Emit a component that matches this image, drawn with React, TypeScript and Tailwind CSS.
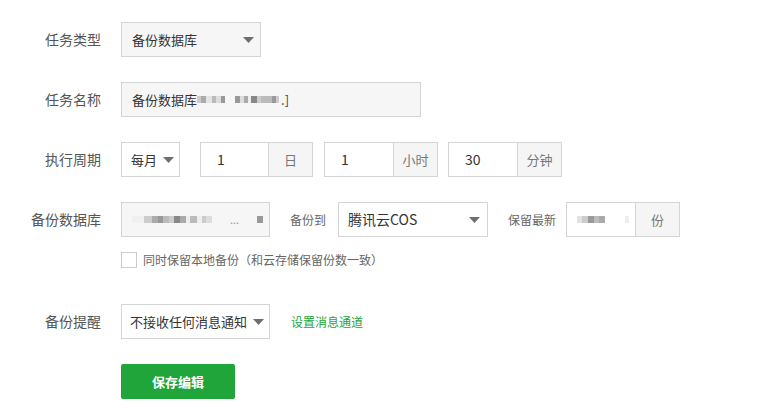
import { useState } from "react";

const font = { fontFamily: '"Noto Sans CJK SC", "Liberation Sans", sans-serif' };

function Caret({ className = "" }: { className?: string }) {
  return (
    <svg width="11" height="6" viewBox="0 0 11 6" className={className}>
      <path d="M0 0h11L5.5 6z" fill="#6f6f6f" />
    </svg>
  );
}

function Label({ children }: { children: React.ReactNode }) {
  return <div className="w-[101px] shrink-0 text-right text-[14px] text-[#555]">{children}</div>;
}

function Blur({ blocks }: { blocks: [number, string][] }) {
  return (
    <span className="inline-flex items-center">
      {blocks.map(([w, c], i) => (
        <span key={i} className="inline-block h-[7px]" style={{ width: w, background: c }} />
      ))}
    </span>
  );
}

function Addon({ value, unit, width }: { value: string; unit: string; width: number }) {
  return (
    <div className="flex h-[35px] border border-[#d5d5d5]" style={{ width }}>
      <div className="flex flex-1 items-center bg-white pl-[16px] text-[14px] text-[#333]">{value}</div>
      <div className="flex w-[44px] items-center justify-center border-l border-[#d5d5d5] bg-[#f5f5f5] text-[13px] text-[#777]">
        {unit}
      </div>
    </div>
  );
}

export default function App() {
  const [keepLocal, setKeepLocal] = useState(false);

  return (
    <div className="h-[415px] w-[778px] bg-white" style={font}>
      <div className="flex flex-col pt-[22px]">
        <div className="flex h-[35px] items-center gap-[20px]">
          <Label>任务类型</Label>
          <div className="flex h-[35px] w-[140px] items-center justify-between border border-[#d5d5d5] bg-[#f6f6f6] pl-[10px] pr-[6px] text-[13px] text-[#333]">
            备份数据库
            <Caret />
          </div>
        </div>

        <div className="mt-[25px] flex h-[35px] items-center gap-[20px]">
          <Label>任务名称</Label>
          <div className="flex h-[35px] w-[300px] items-center border border-[#d5d5d5] bg-[#f6f6f6] pl-[10px] text-[13px] text-[#333]">
            备份数据库
            <Blur
              blocks={[
                [4, "#ccc"], [5, "#aaa"], [6, "#e4e4e4"], [4, "#bbb"], [5, "#ddd"], [4, "#999"], [10, "#f6f6f6"],
                [5, "#999"], [4, "#ddd"], [4, "#aaa"], [3, "#eee"], [6, "#888"], [4, "#ccc"], [4, "#bbb"], [7, "#bbb"],
                [4, "#999"], [3, "#ccc"],
              ]}
            />
            <span className="ml-[2px] text-[#444]">.]</span>
          </div>
        </div>

        <div className="mt-[25px] flex h-[35px] items-center">
          <Label>执行周期</Label>
          <div className="ml-[20px] flex h-[35px] w-[59px] items-center justify-between border border-[#d5d5d5] bg-white pl-[9px] pr-[5px] text-[13px] text-[#333]">
            每月
            <Caret />
          </div>
          <div className="ml-[20px]">
            <Addon value="1" unit="日" width={113} />
          </div>
          <div className="ml-[11px]">
            <Addon value="1" unit="小时" width={114} />
          </div>
          <div className="ml-[10px]">
            <Addon value="30" unit="分钟" width={114} />
          </div>
        </div>

        <div className="mt-[25px] flex h-[35px] items-center">
          <Label>备份数据库</Label>
          <div className="ml-[20px] flex h-[35px] w-[149px] items-center justify-between border border-[#d5d5d5] bg-[#f6f6f6] pl-[10px] pr-[6px] text-[13px] text-[#999]">
            <Blur
              blocks={[
                [12, "#f0f0f0"], [8, "#ccc"], [6, "#aaa"], [5, "#999"], [6, "#bbb"], [5, "#ccc"], [6, "#888"], [6, "#aaa"],
                [4, "#eee"], [7, "#bbb"], [5, "#eee"], [4, "#ccc"], [6, "#ddd"],
              ]}
            />
            <span className="text-[11px]">...</span>
            <span className="inline-block h-[7px] w-[6px] bg-[#999]" />
          </div>
          <div className="ml-[20px] text-[12px] text-[#666]">备份到</div>
          <div className="ml-[12px] flex h-[35px] w-[150px] items-center justify-between border border-[#d5d5d5] bg-white pl-[9px] pr-[7px] text-[14px] text-[#333]">
            腾讯云COS
            <Caret />
          </div>
          <div className="ml-[20px] text-[12px] text-[#666]">保留最新</div>
          <div className="ml-[10px] flex h-[35px] w-[114px] border border-[#d5d5d5]">
            <div className="flex flex-1 items-center bg-white pl-[10px]">
              <Blur blocks={[[5, "#e2e2e2"], [6, "#ccc"], [6, "#999"], [5, "#bbb"], [6, "#aaa"], [20, "#fff"], [4, "#eee"]]} />
            </div>
            <div className="flex w-[44px] items-center justify-center border-l border-[#d5d5d5] bg-[#f5f5f5] text-[13px] text-[#777]">
              份
            </div>
          </div>
        </div>

        <div className="mt-[15px] flex h-[16px] items-center pl-[121px]">
          <button
            onClick={() => setKeepLocal(!keepLocal)}
            className="h-[16px] w-[16px] border border-[#ccc] bg-white"
          />
          <span className="ml-[6px] text-[12px] text-[#666]">同时保留本地备份（和云存储保留份数一致）</span>
        </div>

        <div className="mt-[36px] flex h-[35px] items-center">
          <Label>备份提醒</Label>
          <div className="ml-[20px] flex h-[35px] w-[149px] items-center justify-between border border-[#d5d5d5] bg-white pl-[8px] pr-[5px] text-[13px] text-[#333]">
            不接收任何消息通知
            <Caret />
          </div>
          <a className="ml-[21px] cursor-pointer text-[12px] text-[#20a53a]">设置消息通道</a>
        </div>

        <div className="mt-[25px] pl-[121px]">
          <button className="h-[35px] w-[114px] rounded-[2px] bg-[#20a53a] text-[13px] font-bold text-white">保存编辑</button>
        </div>
      </div>
    </div>
  );
}
